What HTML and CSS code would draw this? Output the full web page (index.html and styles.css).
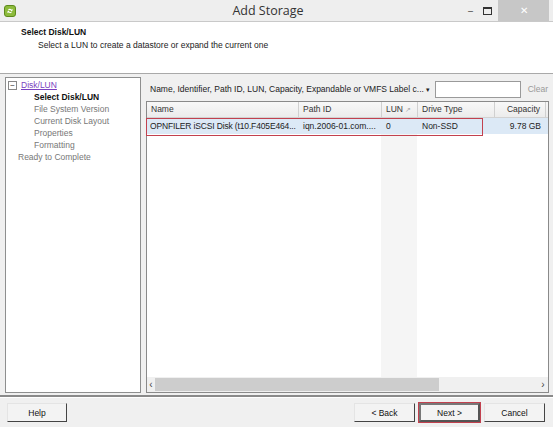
FILE: index.html
```html
<!DOCTYPE html>
<html lang="en">
<head>
  <meta charset="UTF-8" />
  <title>Add Storage</title>
  <link rel="stylesheet" href="styles.css">
</head>
<body>
  <div class="window">
    <div class="titlebar">
      <svg class="app-icon" width="12" height="12" viewBox="0 0 12 12">
        <rect x="0.5" y="0.5" width="11" height="11" rx="2.5" fill="#8dbb3c" stroke="#5e8a1c"/>
        <path d="M3.5 7.5 L5 6 M7 6 L8.5 4.5 M4.5 5 a1.6 1.6 0 0 1 2.5 0 M5 7 a1.6 1.6 0 0 0 2.5 0" stroke="#fff" stroke-width="1.2" fill="none"/>
      </svg>
      <div class="title">Add Storage</div>
      <div class="controls">
        <span class="ctl min">&#8211;</span>
        <span class="ctl max"><span class="box"></span></span>
        <span class="ctl close">&#10005;</span>
      </div>
    </div>

    <div class="header">
      <div class="h-title">Select Disk/LUN</div>
      <div class="h-sub">Select a LUN to create a datastore or expand the current one</div>
    </div>

    <div class="main">
      <div class="nav">
        <div class="nav-group"><span class="tree-box">&#8722;</span><a class="nav-link">Disk/LUN</a></div>
        <div class="nav-item current">Select Disk/LUN</div>
        <div class="nav-item">File System Version</div>
        <div class="nav-item">Current Disk Layout</div>
        <div class="nav-item">Properties</div>
        <div class="nav-item">Formatting</div>
        <div class="nav-top">Ready to Complete</div>
      </div>

      <div class="content">
        <div class="filter">
          <span class="filter-label">Name, Identifier, Path ID, LUN, Capacity, Expandable or VMFS Label c... <span class="caret">&#9662;</span></span>
          <span class="filter-input"></span>
          <span class="clear">Clear</span>
        </div>

        <div class="grid">
          <div class="sort-col"></div>
          <div class="row head">
            <div class="c name">Name</div>
            <div class="c path">Path ID</div>
            <div class="c lun">LUN <span class="arrow">&#8599;</span></div>
            <div class="c type">Drive Type</div>
            <div class="c cap">Capacity</div>
          </div>
          <div class="row sel">
            <div class="c name tight">OPNFILER iSCSI Disk (t10.F405E464...</div>
            <div class="c path">iqn.2006-01.com....</div>
            <div class="c lun">0</div>
            <div class="c type">Non-SSD</div>
            <div class="c cap">9.78 GB</div>
            <div class="mark"></div>
          </div>
          <div class="spacer"></div>
          <div class="hscroll">
            <span class="sarrow">&#8249;</span>
            <span class="thumb"></span>
            <span class="sarrow">&#8250;</span>
          </div>
        </div>
      </div>
    </div>

    <div class="footer">
      <button class="btn help">Help</button>
      <div class="right">
        <button class="btn">&lt; Back</button>
        <button class="btn next">Next &gt;</button>
        <button class="btn">Cancel</button>
      </div>
    </div>
  </div>
</body>
</html>
```

FILE: styles.css
```css
body {
  margin: 0;
  font-family: 'Liberation Sans', Arial, sans-serif;
  font-size: 8.5px;
  color: #222;
  background: #f0f0f0;
}
.window {
  width: 553px;
  height: 427px;
  display: flex;
  flex-direction: column;
  overflow: hidden;
}
.titlebar {
  height: 21px;
  display: flex;
  align-items: center;
  background: #eeeeee;
  border-bottom: 1px solid #c9c9c9;
}
.app-icon {
  margin-left: 4px;
}
.title {
  flex: 1;
  text-align: center;
  font-family: 'Open Sans', 'Liberation Sans', sans-serif;
  font-size: 12.5px;
  color: #333;
  margin-left: 58px;
}
.controls {
  display: flex;
  align-self: stretch;
}
.ctl {
  width: 17px;
  display: flex;
  align-items: center;
  justify-content: center;
  color: #333;
  font-size: 9px;
}
.ctl .box {
  width: 7px;
  height: 5px;
  border: 1px solid #333;
  border-top-width: 2px;
}
.ctl.close {
  width: 51px;
  margin-left: 2px;
  margin-right: 4px;
  background: #c7c7c7;
  color: #fff;
  font-size: 10px;
}

.header {
  height: 52px;
  background: #fff;
  border-bottom: 1px solid #a9a9a9;
  padding: 5px 0 0 21px;
  box-sizing: border-box;
}
.h-title {
  font-weight: bold;
  color: #111;
}
.h-sub {
  margin: 3px 0 0 17px;
}

.main {
  flex: 1;
  display: flex;
  gap: 5px;
  padding: 3px 4px 2px 5px;
  border-bottom: 2px solid #8a8a8a;
}
.nav {
  width: 134px;
  background: #fff;
  border: 1px solid #8e8f8f;
  padding-top: 1px;
  line-height: 12px;
}
.nav-group {
  display: flex;
  align-items: center;
  padding-left: 2px;
}
.tree-box {
  width: 7px;
  height: 7px;
  border: 1px solid #888;
  font-size: 8px;
  line-height: 7px;
  text-align: center;
  color: #333;
  margin-right: 4px;
}
.nav-link {
  color: #7b3fc0;
  text-decoration: underline;
}
.nav-item {
  padding-left: 28px;
  color: #777;
}
.nav-item.current {
  color: #111;
  font-weight: bold;
}
.nav-top {
  padding-left: 12px;
  color: #777;
}

.content {
  flex: 1;
  display: flex;
  flex-direction: column;
}
.filter {
  height: 24px;
  display: flex;
  align-items: center;
  padding-left: 4px;
}
.filter-label {
  flex: 1;
}
.caret {
  font-size: 7px;
}
.filter-input {
  width: 84px;
  height: 15px;
  background: #fff;
  border: 1px solid #9a9a9a;
  margin-right: 7px;
}
.clear {
  color: #999;
  margin-right: 1px;
}

.grid {
  flex: 1;
  background: #fff;
  border: 1px solid #8a8a8a;
  display: flex;
  flex-direction: column;
  position: relative;
}
.sort-col {
  position: absolute;
  left: 234px;
  top: 0;
  width: 36px;
  bottom: 15px;
  background: #f5f5f5;
}
.row {
  display: flex;
  height: 15px;
  align-items: center;
  position: relative;
}
.row.head {
  background: linear-gradient(#f8f8f8, #ececec);
  border-bottom: 1px solid #d2d2d2;
  color: #333;
}
.row.head .c {
  border-right: 1px solid #d0d0d0;
  height: 15px;
  line-height: 15px;
}
.row.sel {
  height: 16px;
  background: #dce9f6;
}
.c {
  padding-left: 4px;
  box-sizing: border-box;
  white-space: nowrap;
  overflow: hidden;
}
.c.tight {
  padding-left: 3px;
  letter-spacing: -0.15px;
}
.c.name { width: 152px; }
.c.path { width: 83px; }
.c.lun { width: 36px; }
.c.type { width: 77px; }
.c.cap { width: 51px; text-align: right; padding-right: 5px; }
.arrow {
  color: #aaa;
  font-size: 7px;
}
.mark {
  position: absolute;
  left: -1px;
  top: 0;
  width: 337px;
  height: 18px;
  border: 1px solid #c2414f;
  box-sizing: border-box;
}
.spacer {
  flex: 1;
}
.hscroll {
  height: 15px;
  display: flex;
  align-items: center;
  background: #f0f0f0;
}
.sarrow {
  width: 8px;
  text-align: center;
  font-size: 10px;
  color: #444;
}
.thumb {
  width: 284px;
  height: 13px;
  background: #cdcdcd;
}
.hscroll .sarrow:last-child {
  margin-left: auto;
  width: 10px;
}

.footer {
  height: 27px;
  display: flex;
  align-items: center;
  padding: 1px 8px 1px 7px;
  border-top: 1px solid #fff;
}
.right {
  margin-left: auto;
  display: flex;
  gap: 4px;
}
.btn {
  font-family: 'Liberation Sans', Arial, sans-serif;
  font-size: 8.5px;
  color: #111;
  width: 61px;
  height: 19px;
  background: #f3f3f3;
  border: 1px solid #e4e4e4;
  border-right-color: #444;
  border-bottom-color: #444;
  padding: 0;
}
.btn.help {
  width: 60px;
}
.btn.next {
  outline: 1px solid #c2414f;
  border: 2px solid #555;
  border-top-color: #777;
  border-left-color: #777;
}
```
